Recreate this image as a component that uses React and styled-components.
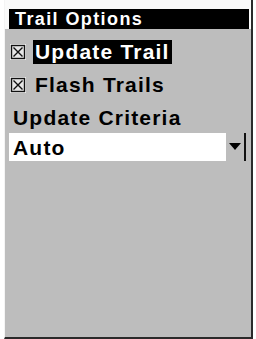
import styled, { createGlobalStyle } from "styled-components";

const Global = createGlobalStyle`
  html, body {
    margin: 0;
    padding: 0;
    background: #ffffff;
  }
  body {
    font-family: "Liberation Sans", Arial, sans-serif;
    font-weight: bold;
  }
`;

function CheckBox() {
  return (
    <BoxIcon viewBox="0 0 16 16" width="16" height="16">
      <rect x="0" y="0" width="16" height="16" fill="#f4f4f4" />
      <rect x="1.5" y="1.5" width="13" height="13" fill="#e6e6e6" stroke="#111" strokeWidth="1.4" />
      <path d="M3.5 3.5 L12.5 12.5 M12.5 3.5 L3.5 12.5" stroke="#111" strokeWidth="1.4" />
    </BoxIcon>
  );
}

function App() {
  return (
    <>
      <Global />
      <Panel>
        <Header>
          <TitleBar>Trail Options</TitleBar>
        </Header>
        <Body>
          <CheckRow>
            <CheckBox />
            <CheckLabel $selected>Update Trail</CheckLabel>
          </CheckRow>
          <CheckRow>
            <CheckBox />
            <CheckLabel>Flash Trails</CheckLabel>
          </CheckRow>
          <Label>Update Criteria</Label>
          <Select>
            <SelectValue>Auto</SelectValue>
            <ArrowButton>
              <svg width="12" height="8" viewBox="0 0 12 8">
                <path d="M0 0 H12 L6 7 Z" fill="#000" />
              </svg>
            </ArrowButton>
          </Select>
        </Body>
      </Panel>
    </>
  );
}

export default App;

const Panel = styled.div`
  margin-left: 4px;
  width: 246px;
  height: 337px;
  background: #bdbdbd;
  border-left: 1px solid #f4f4f4;
  border-right: 2px solid #2a2a2a;
  border-bottom: 2px solid #2a2a2a;
  display: flex;
  flex-direction: column;
`;

const Header = styled.div`
  background: #fafafa;
  padding: 9px 2px 0 4px;
`;

const TitleBar = styled.div`
  height: 20px;
  background: #000;
  color: #fff;
  font-size: 18px;
  line-height: 20px;
  letter-spacing: 1.4px;
  padding-left: 6px;
  white-space: nowrap;
`;

const Body = styled.div`
  display: flex;
  flex-direction: column;
  padding: 11px 4px 0 4px;
`;

const CheckRow = styled.div`
  display: flex;
  align-items: center;
  gap: 7px;
  height: 24px;
  margin-bottom: 9px;
  padding-left: 1px;
`;

const BoxIcon = styled.svg`
  flex: none;
`;

const CheckLabel = styled.span`
  font-size: 21px;
  line-height: 24px;
  letter-spacing: 1.2px;
  padding: 0 2px;
  color: ${(p) => (p.$selected ? "#fff" : "#000")};
  background: ${(p) => (p.$selected ? "#000" : "transparent")};
`;

const Label = styled.div`
  font-size: 21px;
  line-height: 24px;
  letter-spacing: 1.2px;
  padding-left: 4px;
  color: #000;
`;

const Select = styled.div`
  margin-top: 3px;
  margin-right: 1px;
  display: flex;
  height: 28px;
  background: #fff;
  border-right: 2px solid #111;
`;

const SelectValue = styled.div`
  flex: 1;
  font-size: 21px;
  line-height: 30px;
  letter-spacing: 1.2px;
  padding-left: 4px;
  color: #000;
`;

const ArrowButton = styled.div`
  width: 18px;
  background: #bdbdbd;
  display: flex;
  align-items: center;
  justify-content: center;
`;
